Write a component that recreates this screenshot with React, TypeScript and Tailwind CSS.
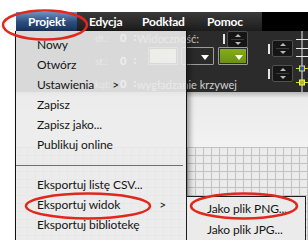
import React from "react";

type Item = { label: string; arrow?: "near" | "far" } | { separator: true };

const items: Item[] = [
  { label: "Nowy" },
  { label: "Otwórz" },
  { label: "Ustawienia", arrow: "near" },
  { label: "Zapisz" },
  { label: "Zapisz jako..." },
  { label: "Publikuj online" },
  { separator: true },
  { label: "Eksportuj listę CSV..." },
  { label: "Eksportuj widok", arrow: "far" },
  { label: "Eksportuj bibliotekę" },
];

function Spinner() {
  return (
    <div className="flex items-center gap-[2px]">
      <div className="w-[2px] h-[10px] bg-[#e6e6e6]" />
      <div className="w-[21px] h-[17px] rounded-[2px] border border-[#505050] bg-[#151515] flex flex-col items-center justify-center gap-[2px]">
        <div className="w-0 h-0 border-x-[3px] border-x-transparent border-b-[3px] border-b-[#b8b8b8]" />
        <div className="w-[13px] h-px bg-[#3c3c3c]" />
        <div className="w-0 h-0 border-x-[3px] border-x-transparent border-t-[3px] border-t-[#b8b8b8]" />
      </div>
    </div>
  );
}

function Dropdown({ fill, w }: { fill: string; w: string }) {
  return (
    <div className={`${w} h-[18px] border border-[#9c9c9c] rounded-[1px] p-px`}>
      <div className={`${fill} w-full h-full flex items-end justify-end pr-[3px] pb-[3px]`}>
        <div className="w-0 h-0 border-x-[4px] border-x-transparent border-t-[5px] border-t-white" />
      </div>
    </div>
  );
}

function ValueRow() {
  return (
    <div className="h-[14px] flex items-center gap-[8px] text-[11px] font-bold text-white">
      <span>0</span>
      <span className="flex flex-col gap-[2px]">
        <span className="w-[2px] h-[2px] bg-[#bbb]" />
        <span className="w-[2px] h-[2px] bg-[#bbb]" />
      </span>
    </div>
  );
}

function CurveHandles() {
  return (
    <svg width="12" height="61" viewBox="0 0 12 61">
      <line x1="6" y1="0" x2="6" y2="61" stroke="#e8e8e8" strokeWidth="1" />
      <line x1="0" y1="8.5" x2="12" y2="8.5" stroke="#e8e8e8" strokeWidth="1" />
      <line x1="0" y1="17.5" x2="12" y2="17.5" stroke="#e8e8e8" strokeWidth="1" />
      <line x1="0" y1="25.5" x2="12" y2="25.5" stroke="#e8e8e8" strokeWidth="1" />
      <line x1="0" y1="37.5" x2="12" y2="37.5" stroke="#d8d83a" strokeWidth="1" />
      <rect x="3.5" y="35" width="5" height="5" fill="#2a4fd0" stroke="#e0e040" strokeWidth="1" />
      <line x1="0" y1="51.5" x2="12" y2="51.5" stroke="#d8d83a" strokeWidth="1" />
      <rect x="3.5" y="49" width="5" height="5" fill="#b8b820" stroke="#f0f060" strokeWidth="1" />
    </svg>
  );
}

export default function App() {
  return (
    <div className="relative w-[308px] h-[240px] overflow-hidden bg-white pl-[16px] pt-[12px] font-['Lato',sans-serif]">
      <div className="flex flex-col h-[228px]">
        {/* menu bar */}
        <div className="h-[19px] flex bg-[linear-gradient(to_bottom,#3a3a3a,#1c1c1c)] text-[12px] font-bold text-white tracking-[-0.2px] whitespace-nowrap">
          <div className="w-[61px] pl-[12px] flex items-center bg-[linear-gradient(to_bottom,#6d91c2,#2a4b7c_55%,#1b365f)]">Projekt</div>
          <div className="w-[54px] pl-[12px] flex items-center">Edycja</div>
          <div className="w-[65px] pl-[11px] flex items-center">Podkład</div>
          <div className="pl-[11px] flex items-center">Pomoc</div>
          <div className="ml-auto w-[46px] bg-black" />
        </div>

        {/* toolbar */}
        <div className="h-[61px] flex bg-[#2b2b2b] text-[#cfcfcf]">
          <div className="ml-[79px] w-[20px] flex flex-col gap-[9px] text-[10px] text-[#bdbdbd]">
            <div className="h-[14px] flex items-center">dł.:</div>
            <div className="h-[14px] flex items-center">st.:</div>
            <div className="h-[14px] flex items-center">kąt:</div>
          </div>
          <div className="w-[33px] pl-[5px] flex flex-col gap-[9px]">
            <ValueRow />
            <ValueRow />
            <ValueRow />
          </div>
          <div className="w-[100px] pt-px flex flex-col">
            <div className="h-[14px] flex items-center">
              <div className="w-[70px] -ml-[18px] text-right text-[11px] leading-[14px] text-[#c8c8c8] whitespace-nowrap">Widoczność:</div>
              <div className="ml-[24px]">
                <Spinner />
              </div>
            </div>
            <div className="mt-px flex gap-[3px]">
              <Dropdown w="w-[30px]" fill="bg-[#eef4c6]" />
              <Dropdown w="w-[33px]" fill="bg-[#2a2a2a]" />
              <div className="ml-px">
                <Dropdown w="w-[30px]" fill="bg-[linear-gradient(to_bottom,#86ad1c,#6a9210)]" />
              </div>
            </div>
            <div className="mt-[13px] w-[140px] -ml-[51px] h-[13px] text-right text-[11px] leading-[13px] text-[#d2d2d2] whitespace-nowrap">
              wygładzanie krzywej
            </div>
          </div>
          <div className="ml-[20px] w-[27px] pt-[9px] flex flex-col gap-[8px]">
            <Spinner />
            <Spinner />
          </div>
          <div className="ml-px">
            <CurveHandles />
          </div>
        </div>

        {/* canvas */}
        <div className="flex-1 flex flex-col bg-[#ececec]">
          <div className="h-[55px] bg-[linear-gradient(to_bottom,#b5b5b5,#ebebeb_6px,#f2f2f2)]" />
          <div className="flex-1 bg-[#ebebeb] bg-[linear-gradient(to_right,#c2c2c2_1px,transparent_1px),linear-gradient(to_bottom,#c2c2c2_1px,transparent_1px)] bg-[size:8px_8px] bg-[position:3px_0px]" />
        </div>
      </div>

      {/* dropdown menu */}
      <div className="absolute left-[15px] top-[31px] w-[172px] h-[215px] bg-[#ececec]/90 border-x border-[#111] shadow-[3px_0_5px_rgba(0,0,0,0.35)] pt-[4px] text-[12px] tracking-[-0.1px] text-[#151515]">
        {items.map((it, i) =>
          "separator" in it ? (
            <div key={i} className="h-[20px] flex items-center pr-[3px]">
              <div className="w-full h-px bg-[#6e6e6e]" />
            </div>
          ) : (
            <div key={i} className="h-[20px] flex items-center pl-[21px] pr-[20px] whitespace-nowrap">
              <span>{it.label}</span>
              {it.arrow === "near" && <span className="ml-[18px]">&gt;</span>}
              {it.arrow === "far" && <span className="ml-auto">&gt;</span>}
            </div>
          )
        )}
      </div>

      {/* submenu */}
      <div className="absolute left-[186px] top-[196px] w-[120px] h-[50px] bg-[#ebebeb] border border-[#1e1e1e] text-[12px] tracking-[-0.1px] text-[#151515]">
        <div className="h-[22px] flex items-center pl-[20px] pt-[2px]">Jako plik PNG...</div>
        <div className="h-[22px] flex items-center pl-[20px]">Jako plik JPG...</div>
      </div>

      {/* annotation circles */}
      <svg className="absolute left-0 top-0 pointer-events-none" width="308" height="240" viewBox="0 0 308 240">
        <ellipse cx="45" cy="25" rx="42" ry="14.5" fill="none" stroke="#e0281c" strokeWidth="2.5" />
        <ellipse cx="88" cy="206" rx="62" ry="12.5" fill="none" stroke="#e0281c" strokeWidth="2.5" />
        <ellipse cx="244" cy="206" rx="53" ry="12.5" fill="none" stroke="#e0281c" strokeWidth="2.5" />
      </svg>
    </div>
  );
}
